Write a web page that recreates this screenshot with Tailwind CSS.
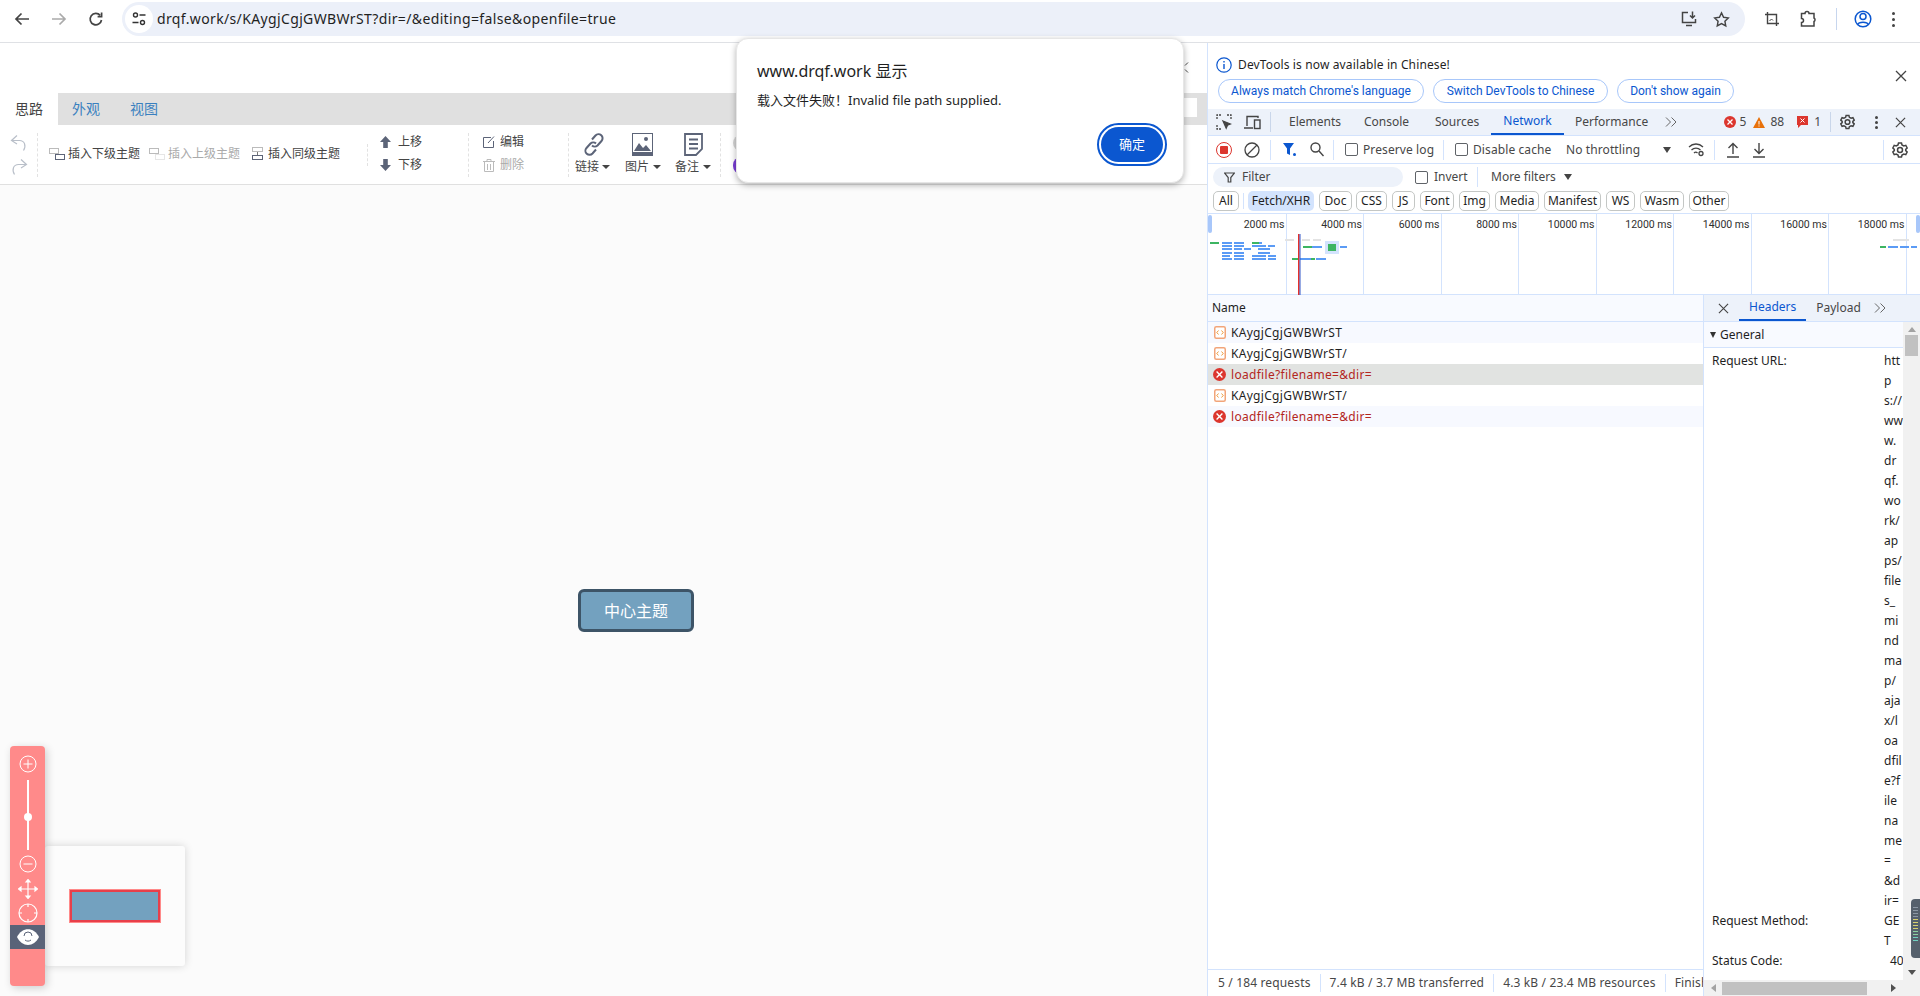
<!DOCTYPE html>
<html lang="en">
<head>
  <meta charset="UTF-8" />
  <title>drqf.work</title>
  <script src="https://cdn.jsdelivr.net/npm/@tailwindcss/browser@4"></script>
</head>
<body class="relative h-[996px] w-[1920px] overflow-hidden bg-white font-['Noto_Sans','Noto_Sans_CJK_SC',sans-serif] text-[12px] text-[#474747]">

  <!-- Browser bar -->
  <header class="flex h-[43px] items-start border-b border-[#dfe1e5] bg-white">
    <div class="flex h-[38px] w-[122px] items-center pl-[13px] gap-[19px]">
      <svg class="w-[18px] h-[18px]" viewBox="0 0 18 18" fill="none" stroke="#444" stroke-width="1.7"><path d="M16 9H3M8.500 3.500 3 9l5.500 5.500"/></svg>
      <svg class="w-[18px] h-[18px]" viewBox="0 0 18 18" fill="none" stroke="#aaa" stroke-width="1.7"><path d="M2 9h13M9.500 3.500 15 9l-5.500 5.500"/></svg>
      <svg class="w-[18px] h-[18px]" viewBox="0 0 18 18" fill="none" stroke="#444" stroke-width="1.7"><path d="M14.500 10a5.700 5.700 0 1 1-1.300-4.600"/><path d="M14.600 2.600v4h-4" /></svg>
    </div>
    <div class="mt-[2px] flex h-[34px] w-[1623px] items-center rounded-full bg-[#ecf0f9] pl-[3px] pr-[14px]">
      <div class="flex h-[28px] w-[28px] items-center justify-center rounded-full bg-white">
        <svg class="w-[16px] h-[16px]" viewBox="0 0 16 16" fill="none" stroke="#333" stroke-width="1.400"><circle cx="4.500" cy="4" r="2"/><path d="M8.500 4h6M1.500 11.500h6"/><circle cx="11.500" cy="11.500" r="2"/></svg>
      </div>
      <span class="ml-[4px] -translate-y-[1px] text-[14px] tracking-[0.36px] text-[#1f1f1f]">drqf.work/s/KAygjCgjGWBWrST?dir=/&amp;editing=false&amp;openfile=true</span>
      <div class="ml-auto flex items-center gap-[15px] pr-[1px]">
        <svg class="w-[18px] h-[18px]" viewBox="0 0 18 18" fill="none" stroke="#444" stroke-width="1.500"><path d="M8 2.500H2.500v10h13V9M12.500 1.500v6.500M10 5.500 12.500 8 15 5.500M6 15.500h6"/></svg>
        <svg class="w-[17px] h-[17px]" viewBox="0 0 18 18" fill="none" stroke="#444" stroke-width="1.500"><path d="m9 2 2.200 4.600 5 .7-3.600 3.500.9 5L9 13.400l-4.500 2.400.9-5L1.800 7.300l5-.7z"/></svg>
      </div>
    </div>
    <div class="flex h-[38px] flex-1 items-center pl-[19px] gap-[20px]">
      <svg class="w-[16px] h-[16px]" viewBox="0 0 16 16" fill="none" stroke="#444" stroke-width="1.400"><path d="M1 3.500h11.500V15M3.500 1v11.500H15"/><path d="M5.500 10l2-2 1.500 1.500" stroke-width="1"/></svg>
      <svg class="w-[16px] h-[18px]" viewBox="0 0 16 18" fill="none" stroke="#444" stroke-width="1.500"><path d="M1.500 3.500h3.500a2 2 0 0 1 4 0h5v4.500a2 2 0 0 1 0 3.500v4.500h-12.500v-3.500a2 2 0 0 0 0-4z"/></svg>
      <div class="h-[22px] w-px bg-[#c7d6ee]"></div>
      <svg class="-ml-[3px] w-[18px] h-[20px]" viewBox="0 0 18 20" fill="none" stroke="#0b57d0" stroke-width="1.500"><circle cx="9" cy="10" r="7.800"/><circle cx="9" cy="7.500" r="3"/><path d="M3.800 15.500c1-3 9.400-3 10.400 0"/></svg>
      <div class="flex flex-col gap-[3px]"><i class="h-[3px] w-[3px] rounded-full bg-[#444]"></i><i class="h-[3px] w-[3px] rounded-full bg-[#444]"></i><i class="h-[3px] w-[3px] rounded-full bg-[#444]"></i></div>
    </div>
  </header>

  <main class="flex h-[953px]">
    <!-- Mind map page -->
    <section class="relative flex w-[1207px] flex-col bg-[#fbfbfb]">
      <div class="h-[50px] bg-white"></div>
      <div class="flex h-[32px] items-stretch bg-[#e0e0e0] text-[14px] text-[#3a80bf]">
        <div class="flex w-[58px] items-center justify-center bg-white pb-[1px] text-[#444]">思路</div>
        <div class="ml-[14px] flex items-center pb-[1px]">外观</div>
        <div class="ml-[30px] flex items-center pb-[1px]">视图</div>
        <div class="ml-auto mr-[10px] mt-[5px] h-[19px] w-[13px] bg-white"></div>
      </div>

      <div class="flex h-[60px] items-center border-b border-[#e0e0e0] bg-white">
        <div class="flex w-[37px] flex-col items-center gap-[6px] pl-[1px]">
          <svg class="w-[18px] h-[18px]" viewBox="0 0 18 18" fill="none" stroke="#b9bfc9" stroke-width="1.200"><path d="M7 1.500 1.500 6.500 7 10M1.500 6.500h8c5 0 7 5 4 10"/></svg>
          <svg class="w-[18px] h-[18px]" viewBox="0 0 18 18" fill="none" stroke="#b9bfc9" stroke-width="1.200"><path d="M11 1.500 16.500 6.500 11 10M16.500 6.500h-8c-5 0-7 5-4 10"/></svg>
        </div>
        <div class="h-[44px] w-0 border-l border-dashed border-[#e2e2e2]"></div>

        <div class="ml-[11px] flex w-[318px] -translate-y-[1px] items-center text-[#444]">
          <svg class="mr-[3px] w-[16px] h-[12px]" viewBox="0 0 16 12" fill="none"><rect x=".5" y=".5" width="9" height="5" stroke="#777" stroke-dasharray="1 1"/><rect x="6.500" y="6.500" width="9" height="5" stroke="#5c6478"/></svg>
          <span>插入下级主题</span>
          <svg class="ml-[9px] mr-[3px] w-[16px] h-[12px]" viewBox="0 0 16 12" fill="none"><rect x=".5" y=".5" width="9" height="5" stroke="#bbb"/><rect x="6.500" y="6.500" width="9" height="5" stroke="#ccc" stroke-dasharray="1 1"/></svg>
          <span class="text-[#aaa]">插入上级主题</span>
          <svg class="ml-[12px] mr-[5px] w-[11px] h-[13px]" viewBox="0 0 11 13" fill="none"><rect x=".5" y=".5" width="10" height="4" stroke="#777" stroke-dasharray="1 1"/><path d="M5.500 5v3" stroke="#777"/><rect x=".5" y="8.500" width="10" height="4" stroke="#5c6478"/></svg>
          <span>插入同级主题</span>
        </div>
        <div class="h-[22px] w-0 border-l border-dashed border-[#e2e2e2]"></div>

        <div class="ml-[12px] flex w-[88px] -translate-y-[1px] flex-col gap-[8px] text-[#444]">
          <div class="flex h-[15px] items-center"><svg class="mr-[7px] w-[11px] h-[12px]" viewBox="0 0 11 12" fill="#5c6478"><path d="M5.500 0 11 6H7.800v6H3.200V6H0z"/></svg>上移</div>
          <div class="flex h-[15px] items-center"><svg class="mr-[7px] w-[11px] h-[12px]" viewBox="0 0 11 12" fill="#5c6478"><path d="M5.500 12 11 6H7.800V0H3.200v6H0z"/></svg>下移</div>
        </div>
        <div class="h-[44px] w-0 border-l border-dashed border-[#e2e2e2]"></div>

        <div class="ml-[14px] flex w-[85px] -translate-y-[1px] flex-col gap-[8px] text-[#444]">
          <div class="flex h-[15px] items-center"><svg class="mr-[5px] w-[12px] h-[12px]" viewBox="0 0 12 12" fill="none" stroke="#5c6478"><path d="M8 1.500H.5v10h10V5M5 7l6-6.500"/></svg>编辑</div>
          <div class="flex h-[15px] items-center text-[#aaa]"><svg class="mr-[5px] w-[12px] h-[13px]" viewBox="0 0 12 13" fill="none" stroke="#bbb"><path d="M0 2.500h12M4 2.500V.5h4v2M1.500 2.500v10h9v-10M4.500 5v6M7.500 5v6"/></svg>删除</div>
        </div>
        <div class="h-[44px] w-0 border-l border-dashed border-[#e2e2e2]"></div>

        <div class="ml-[6px] flex w-[50px] flex-col items-start">
          <svg class="ml-[8px] w-[22px] h-[23px]" viewBox="0 0 22 23" fill="none" stroke="#5c6478" stroke-width="2"><path d="M9 6.500l3.500-4a4 4 0 0 1 6 5.500l-4 4.500a4 4 0 0 1-5.500 0"/><path d="M13 16.500l-3.500 4a4 4 0 0 1-6-5.500l4-4.500a4 4 0 0 1 5.500 0"/></svg>
          <div class="mt-[2px] flex items-center">链接<i class="ml-[3px] border-x-[4px] border-t-[4px] border-x-transparent border-t-[#444]"></i></div>
        </div>
        <div class="flex w-[50px] flex-col items-start">
          <svg class="ml-[7px] w-[21px] h-[23px]" viewBox="0 0 21 23" fill="none"><rect x=".5" y=".5" width="20" height="21" stroke="#5c6478"/><path d="M2 18l5-8 4 5 3-3 5 6z" fill="#5c6478"/><circle cx="14" cy="6" r="2" fill="#5c6478"/><rect y="19" width="21" height="4" fill="#5c6478"/></svg>
          <div class="mt-[2px] flex items-center">图片<i class="ml-[4px] border-x-[4px] border-t-[4px] border-x-transparent border-t-[#444]"></i></div>
        </div>
        <div class="flex w-[44px] flex-col items-start">
          <svg class="ml-[9px] w-[19px] h-[23px]" viewBox="0 0 19 23" fill="none" stroke="#5c6478" stroke-width="1.800"><path d="M1 1h17v15l-6 6H1z"/><path d="M5 6.500h9M5 11h9M5 15.500h9"/></svg>
          <div class="mt-[2px] flex items-center">备注<i class="ml-[4px] border-x-[4px] border-t-[4px] border-x-transparent border-t-[#444]"></i></div>
        </div>
        <div class="ml-[1px] h-[44px] w-0 border-l border-dashed border-[#e2e2e2]"></div>
        <div class="ml-[12px] flex flex-col gap-[6px]">
          <i class="h-[16px] w-[16px] rounded-full bg-[#d5d5d5]"></i>
          <i class="h-[17px] w-[16px] rounded-full bg-[#7a3fd6]"></i>
        </div>
      </div>

      <!-- Overlays on the canvas -->
      <div class="absolute left-[578px] top-[546px] flex h-[43px] w-[116px] items-center justify-center rounded-[6px] border-[3px] border-[#3d5467] bg-[#73a1bf] text-[16px] text-white">中心主题</div>

      <div class="absolute left-[45px] top-[803px] h-[120px] w-[140px] rounded-[3px] bg-[#fcfcfc] shadow-[0_0_8px_rgba(0,0,0,0.16)]">
        <div class="absolute left-[25px] top-[44px] h-[32px] w-[90px] border-2 border-[#e83f4a] bg-[#73a1bf] outline outline-1 outline-[#ff8a8a]"></div>
      </div>

      <div class="absolute left-[10px] top-[703px] flex h-[240px] w-[35px] flex-col items-center rounded-[4px] bg-[#ff8a8a] pt-[9px] shadow-[2px_2px_8px_rgba(0,0,0,0.18)]">
        <svg class="w-[18px] h-[18px]" viewBox="0 0 18 18" fill="none" stroke="#fff" stroke-width="1"><circle cx="9" cy="9" r="8"/><path d="M9 4.500v9M4.500 9h9"/></svg>
        <div class="relative mt-[7px] h-[70px] w-[2px] bg-white">
          <i class="absolute left-[-3px] top-[33px] h-[8px] w-[8px] rounded-full bg-white"></i>
        </div>
        <svg class="mt-[5px] w-[18px] h-[18px]" viewBox="0 0 18 18" fill="none" stroke="#fff" stroke-width="1"><circle cx="9" cy="9" r="8"/><path d="M4.500 9h9"/></svg>
        <svg class="mt-[6px] w-[20px] h-[20px]" viewBox="0 0 20 20" fill="#fff" stroke="#fff" stroke-width="1.200"><path d="M10 2v16M2 10h16" fill="none"/><path d="M10 .5 8 3h4zM10 19.500 8 17h4zM.5 10 3 8v4zM19.500 10 17 8v4z"/></svg>
        <svg class="mt-[4px] w-[20px] h-[20px]" viewBox="0 0 20 20" fill="none" stroke="#fff" stroke-width="1.200"><circle cx="10" cy="10" r="9"/><path d="M10 1v3M10 16v3M1 10h3M16 10h3"/></svg>
        <div class="mt-[2px] flex h-[24px] w-full items-center justify-center bg-[#5a6378]">
          <svg class="w-[22px] h-[16px]" viewBox="0 0 22 16"><path d="M0 8c5-10.500 17-10.500 22 0-5 10.500-17 10.500-22 0z" fill="#fff"/><path d="M7 7a4 4 0 0 1 8 0M8 11c2 1.500 4 1.500 6 0" fill="none" stroke="#5a6378" stroke-width="1"/></svg>
        </div>
      </div>
    </section>

    <!-- DevTools -->
    <section class="flex w-[713px] flex-col border-l border-[#d3e3fd] bg-white">
      <div class="relative h-[66px] flex-none">
        <div class="flex h-[44px] items-center pl-[8px]">
          <svg class="w-[16px] h-[16px]" viewBox="0 0 16 16" fill="none" stroke="#0b57d0" stroke-width="1.200"><circle cx="8" cy="8" r="7.200"/><path d="M8 7v5M8 4v1.500" stroke-width="1.400"/></svg>
          <span class="ml-[6px] tracking-[0.13px] text-[#1f1f1f]">DevTools is now available in Chinese!</span>
        </div>
        <div class="absolute left-[10px] top-[36px] flex gap-[9px] font-['Roboto'] text-[#0b57d0]">
          <div class="flex h-[24px] w-[206px] items-center justify-center rounded-full border border-[#a8c7fa]">Always match Chrome's language</div>
          <div class="flex h-[24px] w-[175px] items-center justify-center rounded-full border border-[#a8c7fa]">Switch DevTools to Chinese</div>
          <div class="flex h-[24px] w-[117px] items-center justify-center rounded-full border border-[#a8c7fa]">Don't show again</div>
        </div>
        <svg class="absolute left-[687px] top-[27px] w-[12px] h-[12px]" viewBox="0 0 12 12" stroke="#444" stroke-width="1.300"><path d="M1 1l10 10M11 1 1 11"/></svg>
      </div>

      <div class="flex h-[27px] flex-none items-center border-b border-[#d3e3fd] bg-[#edf2fa]">
        <svg class="ml-[8px] w-[16px] h-[16px]" viewBox="0 0 16 16" fill="none" stroke="#444" stroke-width="1.300"><path d="M1 5V1h4M11 1h4v4M1 11v4h4" stroke-dasharray="2 1"/><path d="M7 7l7.500 3-3 1.200-1.300 3z" fill="#444"/></svg>
        <svg class="ml-[12px] w-[17px] h-[15px]" viewBox="0 0 17 15" fill="none" stroke="#444" stroke-width="1.400"><path d="M3 11V1.500h11v1.500M0 13h9"/><rect x="10.500" y="5" width="5.500" height="8.500"/></svg>
        <div class="ml-[9px] h-[20px] w-px bg-[#c9d6ea]"></div>
        <div class="flex h-full items-center">
          <span class="ml-[18px] w-[51px]">Elements</span>
          <span class="ml-[24px] w-[47px]">Console</span>
          <span class="ml-[24px] w-[44px]">Sources</span>
          <span class="ml-[12px] flex h-full w-[73px] items-center justify-center border-b-2 border-[#0b57d0] text-[#0b57d0]">Network</span>
          <span class="ml-[11px] w-[73px] whitespace-nowrap">Performance</span>
          <svg class="ml-[17px] w-[12px] h-[10px]" viewBox="0 0 12 10" fill="none" stroke="#666" stroke-width="1"><path d="M1 .5 5.500 5 1 9.500M6.500 .5 11 5 6.500 9.500"/></svg>
        </div>
        <div class="ml-auto flex items-center pr-[14px]">
          <i class="flex h-[12px] w-[12px] items-center justify-center rounded-full bg-[#dc362e]"><svg class="w-[6px] h-[6px]" viewBox="0 0 6 6" stroke="#fff" stroke-width="1.300"><path d="M.5.5l5 5M5.500.5l-5 5"/></svg></i>
          <span class="ml-[4px]">5</span>
          <svg class="ml-[7px] w-[12px] h-[11px]" viewBox="0 0 12 11"><path d="M6 0l6 11H0z" fill="#e8710a"/><path d="M6 4v3.500M6 8.500v1" stroke="#fff"/></svg>
          <span class="ml-[5px]">88</span>
          <svg class="ml-[13px] w-[11px] h-[12px]" viewBox="0 0 11 12"><path d="M0 0h11v9H4l-3 3V9H0z" fill="#dc362e"/><path d="M3.500 2.500l4 4M7.500 2.500l-4 4" stroke="#fff"/></svg>
          <span class="ml-[6px]">1</span>
          <div class="ml-[9px] h-[20px] w-px bg-[#c9d6ea]"></div>
          <svg class="ml-[9px] w-[15px] h-[16px]" viewBox="0 0 16 16" fill="none" stroke="#444" stroke-width="1.600"><circle cx="8" cy="8" r="2.500"/><path d="M6.500 1h3l.5 2 1.800 1 2-.6 1.400 2.600-1.500 1.400v1.200l1.500 1.400-1.400 2.600-2-.6-1.800 1-.5 2h-3l-.5-2-1.800-1-2 .6-1.400-2.600 1.500-1.400V7.400L.8 6l1.400-2.600 2 .6 1.800-1z"/></svg>
          <div class="ml-[20px] flex flex-col gap-[2px]"><i class="h-[3px] w-[3px] rounded-full bg-[#444]"></i><i class="h-[3px] w-[3px] rounded-full bg-[#444]"></i><i class="h-[3px] w-[3px] rounded-full bg-[#444]"></i></div>
          <svg class="ml-[17px] w-[11px] h-[11px]" viewBox="0 0 12 12" stroke="#444" stroke-width="1.300"><path d="M1 1l10 10M11 1 1 11"/></svg>
        </div>
      </div>

      <div class="flex h-[28px] flex-none items-center border-b border-[#d3e3fd]">
        <i class="ml-[8px] flex h-[16px] w-[16px] items-center justify-center rounded-full border-[1.500px] border-[#dc362e]"><i class="h-[8px] w-[8px] rounded-[1px] bg-[#dc362e]"></i></i>
        <svg class="ml-[12px] w-[16px] h-[16px]" viewBox="0 0 16 16" fill="none" stroke="#444" stroke-width="1.300"><circle cx="8" cy="8" r="7"/><path d="M3 13 13 3"/></svg>
        <div class="ml-[10px] h-[20px] w-px bg-[#d3e3fd]"></div>
        <svg class="ml-[12px] w-[15px] h-[15px]" viewBox="0 0 15 15" fill="#0b57d0"><path d="M0 1h11L7 6.500V13L4 11.500V6.500z"/><circle cx="11.500" cy="12.500" r="1.500"/></svg>
        <svg class="ml-[12px] w-[14px] h-[15px]" viewBox="0 0 14 15" fill="none" stroke="#444" stroke-width="1.400"><circle cx="5.500" cy="5.500" r="4.500"/><path d="M9 9l4.500 5"/></svg>
        <div class="ml-[9px] h-[20px] w-px bg-[#d3e3fd]"></div>
        <i class="ml-[11px] h-[13px] w-[13px] rounded-[2px] border border-[#5f6368]"></i>
        <span class="ml-[5px] w-[71px] whitespace-nowrap tracking-[0.1px]">Preserve log</span>
        <div class="ml-[9px] h-[20px] w-px bg-[#d3e3fd]"></div>
        <i class="ml-[11px] h-[13px] w-[13px] rounded-[2px] border border-[#5f6368]"></i>
        <span class="ml-[5px] w-[78px] whitespace-nowrap tracking-[0.1px]">Disable cache</span>
        <span class="ml-[15px] w-[74px] whitespace-nowrap tracking-[0.1px]">No throttling</span>
        <i class="ml-[23px] border-x-[4px] border-t-[6px] border-x-transparent border-t-[#444]"></i>
        <svg class="ml-[17px] w-[17px] h-[15px]" viewBox="0 0 17 15" fill="none" stroke="#444" stroke-width="1.300"><path d="M1 5c4-4 10-4 14 0M3.500 8c2.500-2.500 6.500-2.500 9 0M6 11c1-1 2.500-1 3.500 0"/><circle cx="13" cy="11.500" r="2"/></svg>
        <div class="ml-[9px] h-[20px] w-px bg-[#d3e3fd]"></div>
        <svg class="ml-[11px] w-[14px] h-[16px]" viewBox="0 0 14 16" fill="none" stroke="#444" stroke-width="1.400"><path d="M7 12V1.500M2.500 6 7 1.500 11.500 6M1 15h12"/></svg>
        <svg class="ml-[12px] w-[14px] h-[16px]" viewBox="0 0 14 16" fill="none" stroke="#444" stroke-width="1.400"><path d="M7 1v10.500M2.500 7 7 11.500 11.500 7M1 15h12"/></svg>
        <div class="ml-[117px] h-[20px] w-px bg-[#d3e3fd]"></div>
        <svg class="ml-[8px] w-[16px] h-[16px]" viewBox="0 0 16 16" fill="none" stroke="#444" stroke-width="1.500"><circle cx="8" cy="8" r="2.500"/><path d="M6.500 1h3l.5 2 1.800 1 2-.6 1.400 2.600-1.500 1.400v1.200l1.500 1.400-1.400 2.600-2-.6-1.800 1-.5 2h-3l-.5-2-1.800-1-2 .6-1.400-2.600 1.500-1.400V7.400L.8 6l1.400-2.600 2 .6 1.800-1z"/></svg>
      </div>

      <div class="flex h-[27px] flex-none items-center pb-[1px]">
        <div class="ml-[5px] flex h-[20px] w-[190px] items-center rounded-full bg-[#edf2fa] pl-[11px]">
          <svg class="w-[11px] h-[11px]" viewBox="0 0 11 11" fill="none" stroke="#444" stroke-width="1.200"><path d="M.5 1h10L6.800 5.500V10H4.200V5.500z"/></svg>
          <span class="ml-[7px]">Filter</span>
        </div>
        <i class="ml-[12px] h-[13px] w-[13px] rounded-[2px] border border-[#5f6368]"></i>
        <span class="ml-[6px] w-[33px]">Invert</span>
        <div class="ml-[10px] h-[20px] w-px bg-[#d3e3fd]"></div>
        <span class="ml-[13px] w-[66px] whitespace-nowrap">More filters</span>
        <i class="ml-[7px] border-x-[4px] border-t-[6px] border-x-transparent border-t-[#444]"></i>
      </div>

      <div class="flex h-[22px] flex-none items-start pl-[5px] text-[#1f1f1f]">
        <div class="flex h-[20px] w-[26px] items-center justify-center rounded-[5px] border border-[#c4c7c5]">All</div>
        <div class="mx-[4px] mt-[2px] h-[16px] w-px bg-[#d3e3fd]"></div>
        <div class="flex h-[20px] w-[66px] items-center justify-center rounded-[5px] bg-[#d3e3fd]">Fetch/XHR</div>
        <div class="ml-[5px] flex h-[20px] w-[33px] items-center justify-center rounded-[5px] border border-[#c4c7c5]">Doc</div>
        <div class="ml-[4px] flex h-[20px] w-[31px] items-center justify-center rounded-[5px] border border-[#c4c7c5]">CSS</div>
        <div class="ml-[5px] flex h-[20px] w-[23px] items-center justify-center rounded-[5px] border border-[#c4c7c5]">JS</div>
        <div class="ml-[5px] flex h-[20px] w-[34px] items-center justify-center rounded-[5px] border border-[#c4c7c5]">Font</div>
        <div class="ml-[5px] flex h-[20px] w-[31px] items-center justify-center rounded-[5px] border border-[#c4c7c5]">Img</div>
        <div class="ml-[5px] flex h-[20px] w-[44px] items-center justify-center rounded-[5px] border border-[#c4c7c5]">Media</div>
        <div class="ml-[5px] flex h-[20px] w-[57px] items-center justify-center rounded-[5px] border border-[#c4c7c5]">Manifest</div>
        <div class="ml-[5px] flex h-[20px] w-[29px] items-center justify-center rounded-[5px] border border-[#c4c7c5]">WS</div>
        <div class="ml-[5px] flex h-[20px] w-[44px] items-center justify-center rounded-[5px] border border-[#c4c7c5]">Wasm</div>
        <div class="ml-[5px] flex h-[20px] w-[40px] items-center justify-center rounded-[5px] border border-[#c4c7c5]">Other</div>
      </div>

      <!-- Timeline overview -->
      <div class="relative flex h-[82px] flex-none border-y border-[#d3e3fd] pl-[1px] font-['Roboto'] text-[10.500px] text-[#303030]">
        <div class="flex h-full w-[77.500px] items-start justify-end whitespace-nowrap border-r border-[#d3e3fd] pr-[1px] pt-[3px]">2000 ms</div>
        <div class="flex h-full w-[77.500px] items-start justify-end whitespace-nowrap border-r border-[#d3e3fd] pr-[1px] pt-[3px]">4000 ms</div>
        <div class="flex h-full w-[77.500px] items-start justify-end whitespace-nowrap border-r border-[#d3e3fd] pr-[1px] pt-[3px]">6000 ms</div>
        <div class="flex h-full w-[77.500px] items-start justify-end whitespace-nowrap border-r border-[#d3e3fd] pr-[1px] pt-[3px]">8000 ms</div>
        <div class="flex h-full w-[77.500px] items-start justify-end whitespace-nowrap border-r border-[#d3e3fd] pr-[1px] pt-[3px]">10000 ms</div>
        <div class="flex h-full w-[77.500px] items-start justify-end whitespace-nowrap border-r border-[#d3e3fd] pr-[1px] pt-[3px]">12000 ms</div>
        <div class="flex h-full w-[77.500px] items-start justify-end whitespace-nowrap border-r border-[#d3e3fd] pr-[1px] pt-[3px]">14000 ms</div>
        <div class="flex h-full w-[77.500px] items-start justify-end whitespace-nowrap border-r border-[#d3e3fd] pr-[1px] pt-[3px]">16000 ms</div>
        <div class="flex h-full w-[77.500px] items-start justify-end whitespace-nowrap border-r border-[#d3e3fd] pr-[1px] pt-[3px]">18000 ms</div>
        <svg class="absolute left-0 top-[-1px] h-[82px] w-[712px]" viewBox="0 0 712 82">
          <rect x="0" y="2" width="4" height="18" rx="2" fill="#a8c7fa"/>
          <rect x="708" y="2" width="4" height="18" rx="2" fill="#a8c7fa"/>
          <g fill="#e3e3e3"><rect x="77" y="26" width="9" height="2"/><rect x="94" y="26" width="8" height="2"/><rect x="105" y="26" width="8" height="2"/><rect x="685" y="26" width="16" height="2"/></g>
          <rect x="117" y="28" width="14" height="13" fill="#d3e3fd"/>
          <g fill="#5b9bf5">
            <rect x="14" y="29" width="10" height="2"/><rect x="26" y="29" width="10" height="2"/><rect x="44" y="29" width="10" height="2"/>
            <rect x="14" y="32" width="10" height="2"/><rect x="26" y="32" width="10" height="2"/><rect x="44" y="32" width="14" height="2"/><rect x="60" y="32" width="7" height="2"/>
            <rect x="14" y="35" width="10" height="2"/><rect x="26" y="35" width="8" height="2"/><rect x="36" y="35" width="7" height="2"/><rect x="50" y="35" width="12" height="2"/>
            <rect x="14" y="39" width="10" height="2"/><rect x="26" y="39" width="10" height="2"/><rect x="50" y="39" width="12" height="2"/>
            <rect x="14" y="42" width="8" height="2"/><rect x="26" y="42" width="10" height="2"/><rect x="44" y="42" width="14" height="2"/><rect x="60" y="42" width="8" height="2"/>
            <rect x="14" y="45" width="10" height="2"/><rect x="26" y="45" width="10" height="2"/><rect x="44" y="45" width="14" height="2"/><rect x="60" y="45" width="8" height="2"/>
            <rect x="104" y="33" width="10" height="2"/><rect x="132" y="33" width="7" height="2"/>
            <rect x="92" y="45" width="11" height="2"/><rect x="108" y="45" width="10" height="2"/>
            <rect x="680" y="33" width="10" height="2"/><rect x="692" y="33" width="9" height="2"/><rect x="703" y="33" width="6" height="2"/>
          </g>
          <g fill="#3db562">
            <rect x="2" y="29" width="9" height="2"/><rect x="44" y="29" width="7" height="2"/><rect x="95" y="33" width="9" height="2"/>
            <rect x="120" y="31" width="8" height="7"/><rect x="84" y="45" width="7" height="2"/><rect x="103" y="45" width="4" height="2"/><rect x="672" y="33" width="6" height="2"/>
          </g>
          <rect x="90" y="21" width="1.500" height="61" fill="#e5302a"/><rect x="91.500" y="21" width="1" height="61" fill="#3056c8"/>
        </svg>
      </div>

      <!-- Requests and details -->
      <div class="flex min-h-0 flex-1">
        <div class="flex w-[495px] flex-col">
          <div class="flex h-[27px] flex-none items-center border-b border-[#d3e3fd] bg-[#f8faff] pb-[1px] pl-[4px] text-[#1f1f1f]">Name</div>
          <div class="flex h-[21px] items-center bg-[#f7f9ff] pl-[6px] tracking-[0.3px] text-[#1f1f1f]"><svg class="mr-[5px] w-[12px] h-[13px]" viewBox="0 0 12 13" fill="none"><rect x=".75" y=".75" width="10.500" height="11.500" rx="1.500" fill="#fff" stroke="#f2a57a" stroke-width="1.500"/><path d="M4.500 4.500 2.800 6.500l1.700 2M7.500 4.500l1.700 2-1.700 2" stroke="#e8810a" stroke-width=".8"/></svg>KAygjCgjGWBWrST</div>
          <div class="flex h-[21px] items-center pl-[6px] tracking-[0.3px] text-[#1f1f1f]"><svg class="mr-[5px] w-[12px] h-[13px]" viewBox="0 0 12 13" fill="none"><rect x=".75" y=".75" width="10.500" height="11.500" rx="1.500" fill="#fff" stroke="#f2a57a" stroke-width="1.500"/><path d="M4.500 4.500 2.800 6.500l1.700 2M7.500 4.500l1.700 2-1.700 2" stroke="#e8810a" stroke-width=".8"/></svg>KAygjCgjGWBWrST/</div>
          <div class="flex h-[21px] items-center bg-[#e1e3e1] pl-[5px] tracking-[0.3px] text-[#b3261e]"><i class="mr-[5px] flex h-[13px] w-[13px] items-center justify-center rounded-full bg-[#dc362e]"><svg class="w-[7px] h-[7px]" viewBox="0 0 6 6" stroke="#fff" stroke-width="1.200"><path d="M.5.5l5 5M5.500.5l-5 5"/></svg></i>loadfile?filename=&amp;dir=</div>
          <div class="flex h-[21px] items-center pl-[6px] tracking-[0.3px] text-[#1f1f1f]"><svg class="mr-[5px] w-[12px] h-[13px]" viewBox="0 0 12 13" fill="none"><rect x=".75" y=".75" width="10.500" height="11.500" rx="1.500" fill="#fff" stroke="#f2a57a" stroke-width="1.500"/><path d="M4.500 4.500 2.800 6.500l1.700 2M7.500 4.500l1.700 2-1.700 2" stroke="#e8810a" stroke-width=".8"/></svg>KAygjCgjGWBWrST/</div>
          <div class="flex h-[21px] items-center bg-[#f7f9ff] pl-[5px] tracking-[0.3px] text-[#b3261e]"><i class="mr-[5px] flex h-[13px] w-[13px] items-center justify-center rounded-full bg-[#dc362e]"><svg class="w-[7px] h-[7px]" viewBox="0 0 6 6" stroke="#fff" stroke-width="1.200"><path d="M.5.5l5 5M5.500.5l-5 5"/></svg></i>loadfile?filename=&amp;dir=</div>
          <div class="flex-1"></div>
          <div class="flex h-[27px] flex-none items-center overflow-hidden whitespace-nowrap border-t border-[#d3e3fd] pl-[10px] tracking-[0.15px]">
            <span>5 / 184 requests</span>
            <div class="mx-[9px] h-[18px] w-px flex-none bg-[#d3e3fd]"></div>
            <span>7.4 kB / 3.7 MB transferred</span>
            <div class="mx-[9px] h-[18px] w-px flex-none bg-[#d3e3fd]"></div>
            <span>4.3 kB / 23.4 MB resources</span>
            <div class="mx-[9px] h-[18px] w-px flex-none bg-[#d3e3fd]"></div>
            <span>Finish: 19.2 s</span>
          </div>
        </div>

        <div class="relative flex w-[217px] flex-col overflow-hidden border-l border-[#d3e3fd]">
          <div class="flex h-[27px] flex-none items-center border-b border-[#d3e3fd] bg-[#edf2fa]">
            <svg class="ml-[14px] w-[11px] h-[11px]" viewBox="0 0 12 12" stroke="#444" stroke-width="1.200"><path d="M1 1l10 10M11 1 1 11"/></svg>
            <span class="ml-[10px] flex h-full items-center border-b-2 border-[#0b57d0] px-[10px] text-[#0b57d0]">Headers</span>
            <span class="ml-[10px]">Payload</span>
            <svg class="ml-[13px] w-[12px] h-[10px]" viewBox="0 0 12 10" fill="none" stroke="#666" stroke-width="1"><path d="M1 .5 5.500 5 1 9.500M6.500 .5 11 5 6.500 9.500"/></svg>
          </div>
          <div class="flex min-h-0 flex-1">
            <div class="min-w-0 flex-1 overflow-hidden">
              <div class="flex h-[26px] items-center border-b border-[#d3e3fd] bg-[#f8faff] pl-[6px] text-[#1f1f1f]"><i class="mr-[4px] border-x-[3.500px] border-t-[6px] border-x-transparent border-t-[#333]"></i>General</div>
              <div class="flex pt-[3px] text-[#1f1f1f]">
                <div class="w-[180px] flex-none pl-[8px] leading-[20px]">Request URL:</div>
                <div class="leading-[20px]">htt<br>p<br>s://<br>ww<br>w.<br>dr<br>qf.<br>wo<br>rk/<br>ap<br>ps/<br>file<br>s_<br>mi<br>nd<br>ma<br>p/<br>aja<br>x/l<br>oa<br>dfil<br>e?f<br>ile<br>na<br>me<br>=<br>&amp;d<br>ir=</div>
              </div>
              <div class="flex text-[#1f1f1f]">
                <div class="w-[180px] flex-none pl-[8px] leading-[20px]">Request Method:</div>
                <div class="leading-[20px]">GE<br>T</div>
              </div>
              <div class="flex text-[#1f1f1f]">
                <div class="w-[186px] flex-none pl-[8px] leading-[20px]">Status Code:</div>
                <div class="leading-[20px]">40</div>
              </div>
            </div>
            <div class="flex w-[17px] flex-none flex-col items-center bg-[#f1f1f1] pt-[5px]">
              <i class="border-x-[4px] border-b-[5px] border-x-transparent border-b-[#a3a3a3]"></i>
              <div class="mt-[3px] h-[21px] w-[13px] bg-[#c1c1c1]"></div>
              <i class="mt-auto mb-[5px] border-x-[4px] border-t-[5px] border-x-transparent border-t-[#505050]"></i>
            </div>
          </div>
          <div class="flex h-[16px] flex-none items-center bg-[#f1f1f1] pl-[7px]">
            <i class="border-y-[4px] border-r-[5px] border-y-transparent border-r-[#a3a3a3]"></i>
            <div class="ml-[6px] h-[13px] w-[145px] bg-[#c1c1c1]"></div>
            <i class="ml-[24px] border-y-[4px] border-l-[5px] border-y-transparent border-l-[#505050]"></i>
          </div>
          <!-- Overlay widget at the window edge -->
          <div class="absolute right-0 top-[604px] flex h-[59px] w-[9px] flex-col gap-[2px] rounded-l-[4px] bg-[#55606c] px-[2px] py-[8px]">
            <i class="h-px bg-[#8c98a5]"></i><i class="h-px bg-[#8c98a5]"></i><i class="h-px bg-[#8c98a5]"></i><i class="h-px bg-[#8c98a5]"></i><i class="h-px bg-[#d8d070]"></i><i class="h-px bg-[#d8d070]"></i><i class="h-px bg-[#d8d070]"></i><i class="h-px bg-[#d8d070]"></i><i class="h-px bg-[#8cd0a0]"></i><i class="h-px bg-[#8cd0a0]"></i><i class="h-px bg-[#70d0c0]"></i><i class="h-px bg-[#70d0c0]"></i>
          </div>
        </div>
      </div>
    </section>
  </main>

  <!-- Alert dialog -->
  <div class="absolute left-[736px] top-[38px] h-[145px] w-[448px] rounded-[12px] border border-[#e6e6e6] bg-white pl-[20px] text-[#1f1f1f] shadow-[0_2px_6px_rgba(0,0,0,0.3)]">
    <div class="mt-[21px] text-[16px] leading-[22px]">www.drqf.work 显示</div>
    <div class="mt-[9px] text-[13px] leading-[18px]">载入文件失败！Invalid file path supplied.</div>
    <div class="absolute right-[20px] bottom-[20px] flex h-[35px] w-[62px] items-center justify-center rounded-full bg-[#0b57d0] text-[13px] text-white outline-2 outline-offset-2 outline-[#0b57d0]">确定</div>
  </div>
  <svg class="absolute left-[1182px] top-[62px] w-[7px] h-[11px]" viewBox="0 0 7 11" fill="none" stroke="#444"><path d="M6 .5 3 3.500M6 10.500 3 7.500"/></svg>
</body>
</html>
